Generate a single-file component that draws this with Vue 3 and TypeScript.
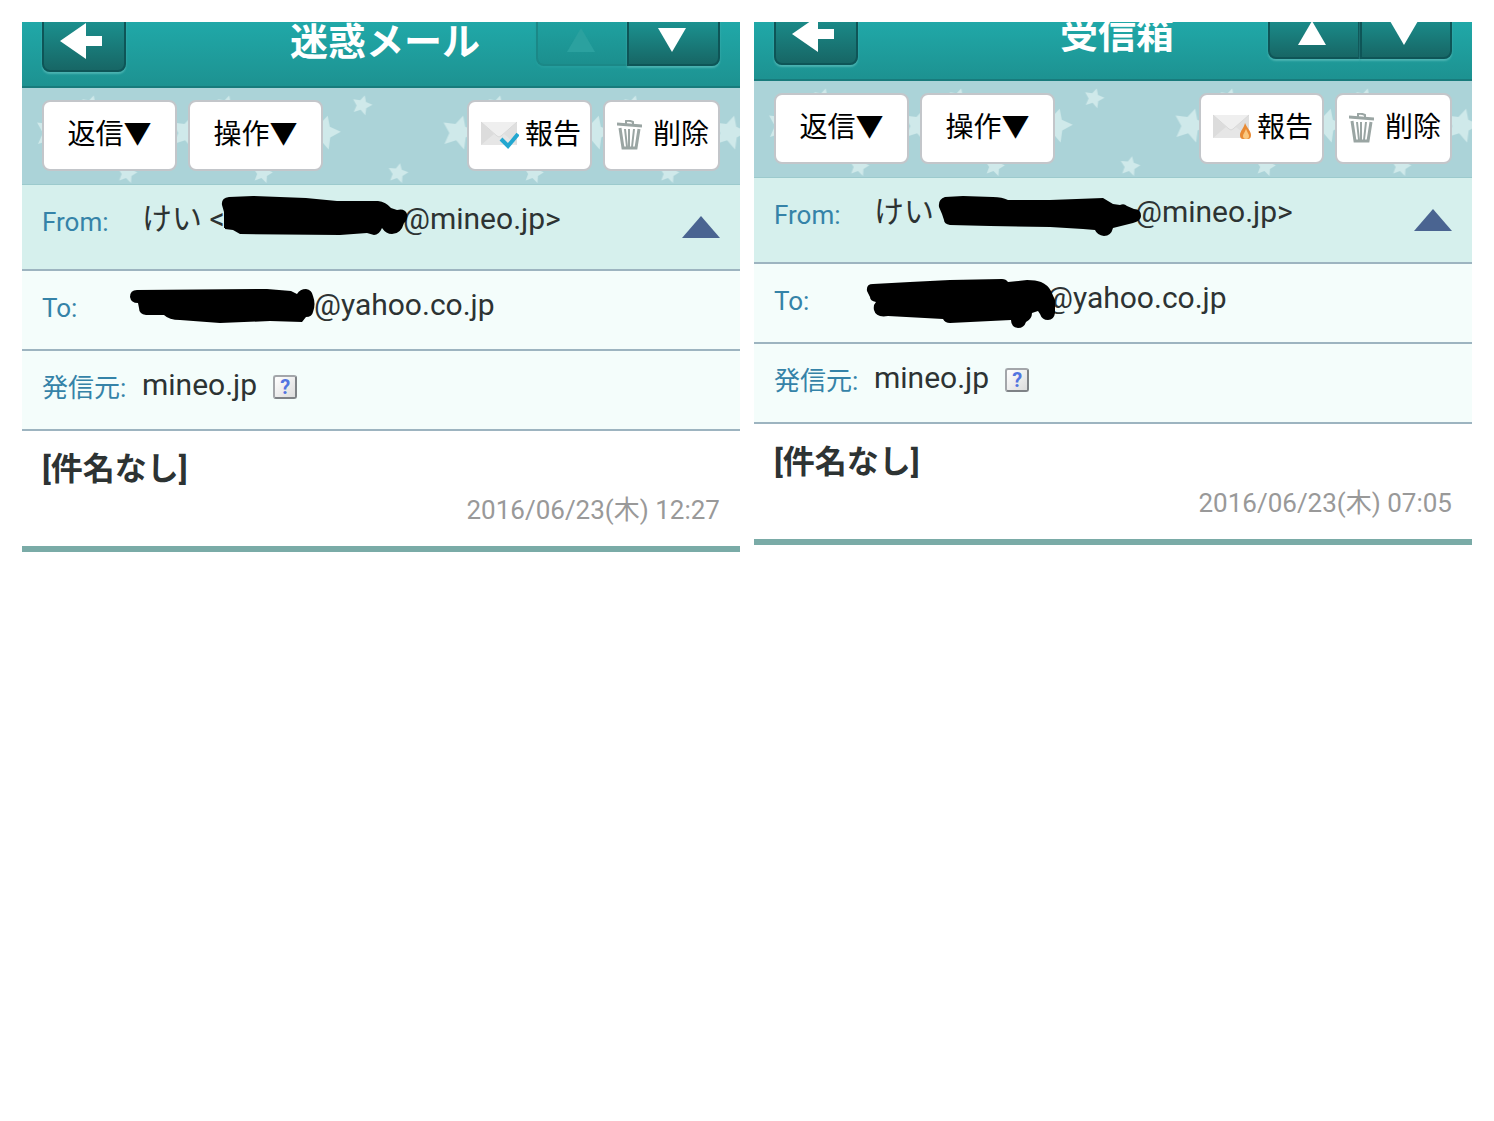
<script setup lang="ts">
interface MailView {
  id: string
  title: string
  cropped: boolean
  prevDisabled: boolean
  reportIcon: 'check' | 'flame'
  fromMask: string
  toMask: string
  date: string
}

const mails: MailView[] = [
  {
    id: 'spam',
    title: '迷惑メール',
    cropped: false,
    prevDisabled: true,
    reportIcon: 'check',
    fromMask:
      'M222 205Q221 198 229 197L253 196L306 198L337 201L378 201Q386 202 391 208L397 210Q405 208 407 214Q408 220 404 223Q401 234 392 234Q386 234 382 228Q379 235 374 235L367 233L340 235L240 234L233 230L225 229V228H224V212Z',
    toMask:
      'M130 297Q130 290 137 290L267 289L291 291L297 294Q300 289 306 289Q312 290 313 296Q316 304 313 312Q312 317 306 317L302 322L270 321L220 323L180 320Q169 320 164 315L146 315Q139 314 139 308L138 303Q131 303 130 297Z',
    date: '2016/06/23(木) 12:27',
  },
  {
    id: 'inbox',
    title: '受信箱',
    cropped: true,
    prevDisabled: false,
    reportIcon: 'flame',
    fromMask:
      'M207 214Q206 206 213 204L231 203L261 204Q270 204 276 207L318 207L371 205L381 211L388 212Q392 210 395 213L402 216Q409 216 409 223Q409 228 401 230L381 235Q379 243 372 243Q365 242 363 237L351 236L318 234L258 233L218 232Q212 231 212 227L210 221Z',
    toMask:
      'M135 298Q134 291 141 291L178 289L218 287L270 286Q274 286 276 289L295 287Q304 287 309 289Q316 292 319 298L323 307L323 320Q322 327 316 327Q310 327 308 321L306 318L300 320Q300 326 294 329Q292 335 286 335Q279 334 279 327L218 330Q213 330 211 326L156 323Q144 325 142 317Q141 312 144 309Q138 308 138 304Z',
    date: '2016/06/23(木) 07:05',
  },
]

const star = '0,-10 3,-4 10,-3 5,2 6,9 0,5 -6,9 -5,2 -10,-3 -3,-4'
</script>

<template>
  <main class="page">
    <article v-for="mail in mails" :key="mail.id" class="mail">
      <header class="bar" :class="{ cropped: mail.cropped }">
        <button class="dark back" type="button" aria-label="戻る">
          <svg width="42" height="36" viewBox="0 0 42 36"><path d="M0 18 26 0V13H42V23H26V36Z" fill="#fff" /></svg>
        </button>
        <h1>{{ mail.title }}</h1>
        <nav class="pager">
          <button class="dark prev" type="button" aria-label="前のメール" :disabled="mail.prevDisabled">
            <svg width="28" height="24" viewBox="0 0 28 24"><path d="M14 0 28 24H0Z" fill="currentColor" /></svg>
          </button>
          <button class="dark next" type="button" aria-label="次のメール">
            <svg width="28" height="24" viewBox="0 0 28 24"><path d="M0 0H28L14 24Z" fill="currentColor" /></svg>
          </button>
        </nav>
      </header>

      <div class="tools">
        <svg class="stars" aria-hidden="true">
          <defs>
            <pattern :id="'stars-' + mail.id" width="135.5" height="97" patternUnits="userSpaceOnUse">
              <g fill="#cfe9ea">
                <polygon :points="star" transform="translate(69 17) rotate(16)" />
                <polygon :points="star" transform="translate(30 44) rotate(16) scale(1.7)" />
                <polygon :points="star" transform="translate(105 85) rotate(12)" />
              </g>
            </pattern>
          </defs>
          <rect width="100%" height="100%" :fill="`url(#stars-${mail.id})`" />
        </svg>
        <div class="group">
          <button class="tool menu" type="button">返信▼</button>
          <button class="tool menu" type="button">操作▼</button>
        </div>
        <div class="group">
          <button class="tool report" type="button">
            <svg width="38" height="28" viewBox="0 0 38 28">
              <rect y="1" width="36" height="23" fill="#e6e6e6" />
              <path d="M0 1 13 13 0 24Z" fill="#dcdcdc" />
              <path d="M36 1 23 13 36 24Z" fill="#dfdfdf" />
              <path d="M0 1H36L20 15Q18 17 16 15Z" fill="#efefef" />
              <path d="M0 1 16 15Q18 17 20 15L36 1" fill="none" stroke="#d8d8d8" />
              <path v-if="mail.reportIcon === 'check'" d="M20 18 27 25 37 13" fill="none" stroke="#22a7d0" stroke-width="4" />
              <g v-else>
                <path d="M32 9C34 14 38 17 38 21Q38 25 35 25H30Q27 25 27 21C27 17 31 14 32 9Z" fill="#e88a34" />
                <path d="M33 15C34 18 36 20 36 22Q36 25 33 25Q30 25 30 22C30 20 32 18 33 15Z" fill="#fbc880" />
              </g>
            </svg>
            報告
          </button>
          <button class="tool delete" type="button">
            <svg width="25" height="30" viewBox="0 0 25 30" fill="none" stroke="#9aa5a3">
              <path d="M0 4 25 6" stroke-width="3" />
              <path d="M9 4V1Q12 0 16 2V5" stroke-width="2" />
              <path d="M3 8 6 28H19L22 9" stroke-width="3" />
              <path d="M8 9 10 27M12 9V27M17 9 15 27" stroke-width="2" />
            </svg>
            削除
          </button>
        </div>
      </div>

      <dl class="fields">
        <div class="field from">
          <dt>From:</dt>
          <dd>
            <span class="sender">けい &lt;</span>
            <svg class="mask" width="178" height="40" viewBox="225 199 178 40" aria-hidden="true"><path :d="mail.fromMask" /></svg>
            <span>@mineo.jp&gt;</span>
          </dd>
          <button class="fold" type="button" aria-label="閉じる">
            <svg width="38" height="22" viewBox="0 0 38 22"><path d="M19 0 38 22H0Z" fill="#4a6491" /></svg>
          </button>
        </div>
        <div class="field">
          <dt>To:</dt>
          <dd>
            <svg class="mask" width="172" height="40" viewBox="142 285 172 40" aria-hidden="true"><path :d="mail.toMask" /></svg>
            <span>@yahoo.co.jp</span>
          </dd>
        </div>
        <div class="field">
          <dt>発信元:</dt>
          <dd>
            <span>mineo.jp</span>
            <button class="help" type="button" aria-label="ヘルプ">?</button>
          </dd>
        </div>
      </dl>

      <section class="subject">
        <h2>[件名なし]</h2>
        <time>{{ mail.date }}</time>
      </section>
    </article>
  </main>
</template>

<style>
body {
  margin: 0;
  background: #fff;
}
</style>

<style scoped>
.page {
  display: flex;
  align-items: flex-start;
  gap: 14px;
  padding: 22px;
  font-family: Roboto, "Noto Sans CJK JP", sans-serif;
  color: #2d3333;
}
.mail {
  flex: 1;
  min-width: 0;
}
button {
  box-sizing: border-box;
  margin: 0;
  padding: 0;
  font: inherit;
  color: inherit;
}
svg {
  display: block;
  flex: none;
}
.bar {
  box-sizing: border-box;
  height: 66px;
  padding: 0 20px 14px;
  display: grid;
  grid-template-columns: 192px 1fr 184px;
  align-items: end;
  align-content: end;
  overflow: hidden;
  border-bottom: 2px solid #187b7c;
  background: linear-gradient(#20a8a8, #1d9291);
}
.bar.cropped {
  height: 59px;
}
.dark {
  display: flex;
  align-items: center;
  justify-content: center;
  border: 2px solid #0e5557;
  background: linear-gradient(#1c9896, #176665);
  color: #fff;
  box-shadow: 0 2px 2px #4bb3b1;
}
.back {
  width: 84px;
  height: 62px;
  padding-right: 6px;
  border-radius: 8px;
}
h1 {
  margin: 0 0 6px;
  font-size: 38px;
  line-height: 48px;
  font-weight: 700;
  text-align: center;
  white-space: nowrap;
  color: #fff;
}
.pager {
  display: flex;
  margin-bottom: 6px;
}
.prev,
.next {
  flex: 1;
  height: 52px;
  padding-right: 4px;
}
.prev {
  border-radius: 0 0 0 8px;
}
.next {
  border-radius: 0 0 8px 0;
}
.prev:disabled {
  border-color: #1b8887;
  border-right-width: 0;
  background: linear-gradient(#1fa3a2, #1c8f8e);
  color: #2ba19f;
  box-shadow: 0 2px 2px #259e9d;
}
.tools {
  position: relative;
  display: flex;
  justify-content: space-between;
  padding: 12px 20px 13px;
  border-bottom: 1px solid #9ccacd;
  background: #abd3d8;
}
.stars {
  position: absolute;
  inset: 0;
  width: 100%;
  height: 100%;
}
.group {
  position: relative;
  display: flex;
  gap: 11px;
}
.tool {
  display: flex;
  align-items: center;
  height: 71px;
  padding: 0 9px 2px 12px;
  border: 2px solid #c3c6ca;
  border-radius: 8px;
  background: #fff;
  color: #000;
  font-size: 28px;
  line-height: 40px;
  white-space: nowrap;
}
.menu {
  width: 135px;
  justify-content: center;
  padding: 0 0 2px;
}
.report {
  gap: 6px;
}
.delete {
  gap: 11px;
}
.fields {
  margin: 0;
}
.field {
  box-sizing: border-box;
  display: flex;
  align-items: flex-start;
  height: 80px;
  padding: 14px 20px 0;
  border-bottom: 2px solid #9db4c0;
  background: #f4fdfb;
}
.from {
  height: 86px;
  background: #d6f0ed;
}
dt {
  width: 100px;
  font-size: 26px;
  line-height: 46px;
  color: #3583a8;
  white-space: nowrap;
}
dd {
  display: flex;
  flex: 1;
  margin: 0;
  font-size: 30px;
  line-height: 40px;
  white-space: nowrap;
}
.sender {
  width: 83px;
}
.mask {
  position: relative;
  overflow: visible;
}
.fold {
  height: 56px;
  border: 0;
  background: none;
}
.help {
  width: 24px;
  height: 24px;
  margin: 10px 0 0 16px;
  border: 2px solid #7e8286;
  border-top-color: #a3a6aa;
  border-left-color: #a3a6aa;
  border-radius: 3px;
  background: linear-gradient(135deg, #fff, #dcdcdc);
  color: #5274e0;
  font-size: 20px;
  line-height: 20px;
  font-weight: 700;
}
.subject {
  display: flex;
  flex-direction: column;
  gap: 4px;
  padding: 18px 20px 19px;
  border-bottom: 6px solid #7aaba7;
}
h2 {
  margin: 0;
  font-size: 32px;
  line-height: 40px;
  font-weight: 700;
}
time {
  align-self: flex-end;
  font-size: 26px;
  line-height: 34px;
  color: #999;
}
</style>
